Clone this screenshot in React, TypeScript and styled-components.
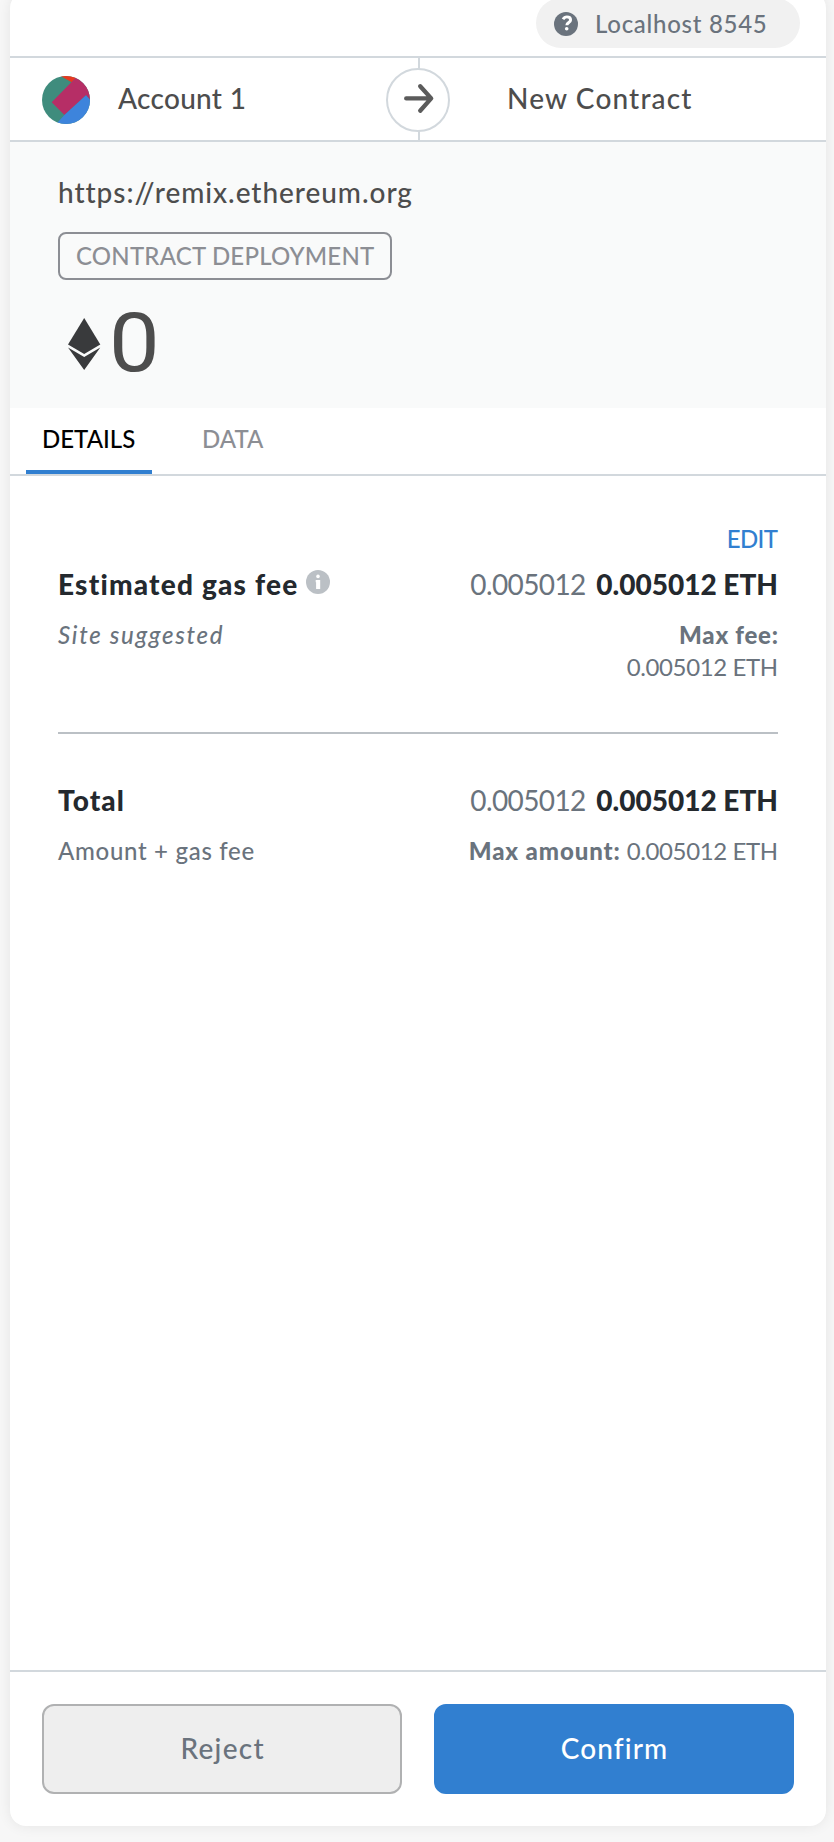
import React from 'react';
import styled, { createGlobalStyle, css } from 'styled-components';

const GlobalStyle = createGlobalStyle`
  * { box-sizing: border-box; }
  body { margin: 0; background: #f7f7f7; font-family: Lato, "Liberation Sans", sans-serif; }
  button { font-family: inherit; }
`;

const colors = {
  line: '#d2d8dd',
  text: '#4d4d4d',
  muted: '#6a737d',
  strong: '#24292e',
  tag: '#8c8e94',
  divider: '#bbc0c5',
  primary: '#317fd0',
};

const Page = styled.main`
  display: flex;
  height: 1842px;
  padding: 0 8px 0 10px;
  overflow: hidden;
`;

const Card = styled.section`
  display: flex;
  flex-direction: column;
  flex: 1;
  height: 1834px;
  margin-top: -8px;
  background: #fff;
  border-radius: 16px;
  box-shadow: 0 0 14px rgba(0, 0, 0, 0.08);
`;

interface TextProps {
  $size?: number;
  $weight?: number;
  $track?: number;
  $color?: string;
  $italic?: boolean;
}

const Text = styled.span<TextProps>`
  font-size: ${p => p.$size ?? 24}px;
  font-weight: ${p => p.$weight ?? 400};
  font-style: ${p => (p.$italic ? 'italic' : 'normal')};
  letter-spacing: ${p => p.$track ?? 0}px;
  margin-right: ${p => -(p.$track ?? 0)}px;
  color: ${p => p.$color ?? colors.muted};
  white-space: nowrap;
`;

const Header = styled.header`
  display: flex;
  justify-content: flex-end;
  height: 66px;
  padding: 6px 26px 0 0;
  border-bottom: 2px solid ${colors.line};
`;

const NetworkPill = styled.div`
  display: flex;
  align-items: center;
  width: 264px;
  height: 50px;
  padding: 2px 0 0 18px;
  gap: 17px;
  border-radius: 25px;
  background: #f1f1f1;

  ${Text} { padding-bottom: 2px; }
`;

const Parties = styled.div`
  position: relative;
  display: grid;
  grid-template-columns: 1fr 1fr;
  height: 84px;
  border-bottom: 2px solid ${colors.line};
`;

const Sender = styled.div`
  display: flex;
  align-items: center;
  gap: 28px;
  padding: 2px 0 0 32px;

  ${Text} { padding-bottom: 4px; }
`;

const Recipient = styled.div`
  display: flex;
  align-items: center;
  padding: 0 0 2px 87px;
  border-left: 2px solid ${colors.line};
`;

const ArrowBadge = styled.div`
  position: absolute;
  top: 10px;
  left: calc(50% - 32px);
  width: 64px;
  height: 64px;
  border: 2px solid ${colors.line};
  border-radius: 50%;
  background: #fff;

  svg { display: block; }
`;

const Summary = styled.div`
  display: flex;
  flex-direction: column;
  align-items: flex-start;
  height: 266px;
  padding: 33px 48px 0;
  background: #f9fafa;
`;

const Origin = styled.div`
  display: flex;
  height: 34px;
  line-height: 34px;
`;

const ActionTag = styled.div`
  display: flex;
  align-items: center;
  width: 334px;
  height: 48px;
  margin-top: 23px;
  padding: 0 0 2px 16px;
  border: 2px solid ${colors.tag};
  border-radius: 8px;
`;

const Amount = styled.div`
  display: flex;
  align-items: center;
  gap: 8px;
  height: 80px;
  margin-top: 20px;
  padding-left: 10px;
  line-height: 80px;

  svg { margin-top: 8px; }
`;

const AmountValue = styled.span`
  padding-top: 6px;
  font-family: Roboto, sans-serif;
  font-size: 82px;
  color: ${colors.text};
  transform: scaleX(1.1);
  transform-origin: left;
`;

const Tabs = styled.nav`
  display: flex;
  gap: 34px;
  height: 68px;
  padding-left: 16px;
  border-bottom: 2px solid ${colors.line};
`;

const Tab = styled.button<{ $active?: boolean }>`
  display: flex;
  align-items: center;
  height: 66px;
  padding: 0 16px 2px;
  background: none;
  border: 0;
  border-bottom: 4px solid transparent;
  ${p => p.$active && css`
    width: 126px;
    border-bottom-color: ${colors.primary};
  `}
`;

const Details = styled.div`
  flex: 1;
  padding: 49px 48px 0;
`;

const EditRow = styled.div`
  display: flex;
  justify-content: flex-end;
  margin-bottom: 14px;
  line-height: 28px;
`;

const Row = styled.div`
  display: flex;
  justify-content: space-between;
  line-height: 34px;
`;

const SubRow = styled(Row)`
  margin-top: 18px;
  line-height: 32px;
`;

const Label = styled.div`
  display: flex;
  align-items: center;
  gap: 9px;

  svg { margin-top: -4px; }
`;

const Values = styled.div<{ $gap?: number }>`
  display: flex;
  gap: ${p => p.$gap ?? 0}px;
`;

const StackedValues = styled(Values)`
  flex-direction: column;
  align-items: flex-end;
`;

const Divider = styled.hr`
  height: 2px;
  margin: 49px 0;
  border: 0;
  background: ${colors.divider};
`;

const Footer = styled.footer`
  display: grid;
  grid-template-columns: 1fr 1fr;
  gap: 32px;
  padding: 32px;
  border-top: 2px solid ${colors.line};
`;

const Button = styled.button<{ $primary?: boolean }>`
  display: flex;
  align-items: center;
  justify-content: center;
  height: 90px;
  padding: 0 0 2px;
  border-radius: 12px;
  border: 2px solid ${p => (p.$primary ? colors.primary : '#b0b1b2')};
  background: ${p => (p.$primary ? colors.primary : '#eee')};
`;

const QuestionIcon = () => (
  <svg width="24" height="24" viewBox="0 0 24 24" fill="none">
    <circle cx="12" cy="12" r="12" fill={colors.muted} />
    <path d="M9 7.2Q10.4 4.9 12.9 4.9C15.3 4.9 16.6 6.2 16.6 7.9C16.6 10.4 12.9 10.5 12.8 13.2" stroke="#fff" strokeWidth="2.9" />
    <circle cx="12.7" cy="16.7" r="1.8" fill="#fff" />
  </svg>
);

const Avatar = () => (
  <svg width="48" height="48" viewBox="0 0 48 48">
    <clipPath id="avatar-clip"><circle cx="24" cy="24" r="24" /></clipPath>
    <g clipPath="url(#avatar-clip)">
      <rect width="48" height="48" fill="#3f8c7d" />
      <path d="M15 -2L29.7 6.3L38 -2Z" fill="#e8381f" />
      <path d="M9.7 26.3L38 -2.5L54 8V30L44 19.3L22.4 39Z" fill="#b62e66" />
      <path d="M44 19.3L52 28V52H10.5L22.4 39Z" fill="#3d84dc" />
    </g>
  </svg>
);

const ArrowIcon = () => (
  <svg width="60" height="60" viewBox="2 2 60 60" fill="none" stroke="#5b5b5b" strokeWidth="4.3" strokeLinecap="round" strokeLinejoin="round">
    <path d="M20.2 30.4H44.5M34.2 18.2L45.2 30.4L34.2 42.7" />
  </svg>
);

const EtherIcon = () => (
  <svg width="33" height="52" viewBox="0 0 33 52" fill="#393a3c">
    <path d="M16.2 0L32.3 26.5L16.2 36L0 26.5Z" />
    <path d="M0 29.5L16.2 39L32.3 29.5L16.2 52Z" />
  </svg>
);

const InfoIcon = () => (
  <svg width="24" height="24" viewBox="0 0 24 24">
    <circle cx="12" cy="12" r="12" fill={colors.divider} />
    <circle cx="12" cy="6.4" r="1.8" fill="#fff" />
    <path d="M9.7 10H14.2V19H10.1V12.2H9.7Z" fill="#fff" />
  </svg>
);

export default function App() {
  return (
    <>
      <GlobalStyle />
      <Page>
        <Card>
          <Header>
            <NetworkPill>
              <QuestionIcon />
              <Text $weight={500} $track={0.72}>Localhost 8545</Text>
            </NetworkPill>
          </Header>
          <Parties>
            <Sender>
              <Avatar />
              <Text $size={28} $weight={500} $track={0.3} $color={colors.text}>Account 1</Text>
            </Sender>
            <Recipient>
              <Text $size={28} $weight={500} $track={1.15} $color={colors.text}>New Contract</Text>
            </Recipient>
            <ArrowBadge><ArrowIcon /></ArrowBadge>
          </Parties>
          <Summary>
            <Origin>
              <Text $size={28} $weight={500} $track={0.95} $color={colors.text}>https://remix.ethereum.org</Text>
            </Origin>
            <ActionTag>
              <Text $weight={500} $track={0.2} $color={colors.tag}>CONTRACT DEPLOYMENT</Text>
            </ActionTag>
            <Amount>
              <EtherIcon />
              <AmountValue>0</AmountValue>
            </Amount>
          </Summary>
          <Tabs>
            <Tab $active><Text $weight={500} $color="#000">DETAILS</Text></Tab>
            <Tab><Text $weight={500} $color={colors.tag}>DATA</Text></Tab>
          </Tabs>
          <Details>
            <EditRow>
              <Text $weight={500} $track={-0.6} $color={colors.primary}>EDIT</Text>
            </EditRow>
            <Row>
              <Label>
                <Text $size={28} $weight={900} $track={1.2} $color={colors.strong}>Estimated gas fee</Text>
                <InfoIcon />
              </Label>
              <Values $gap={10}>
                <Text $size={28} $track={-0.6}>0.005012</Text>
                <Text $size={28} $weight={900} $color={colors.strong}>0.005012 ETH</Text>
              </Values>
            </Row>
            <SubRow>
              <Text $italic $weight={500} $track={1.7}>Site suggested</Text>
              <StackedValues>
                <Text $weight={900} $track={0.75}>Max fee:</Text>
                <Text $track={-0.4}>0.005012 ETH</Text>
              </StackedValues>
            </SubRow>
            <Divider />
            <Row>
              <Text $size={28} $weight={900} $track={1.1} $color={colors.strong}>Total</Text>
              <Values $gap={10}>
                <Text $size={28} $track={-0.6}>0.005012</Text>
                <Text $size={28} $weight={900} $color={colors.strong}>0.005012 ETH</Text>
              </Values>
            </Row>
            <SubRow>
              <Text $weight={500} $track={0.7}>Amount + gas fee</Text>
              <Values $gap={7}>
                <Text $weight={900} $track={0.9}>Max amount:</Text>
                <Text $track={-0.4}>0.005012 ETH</Text>
              </Values>
            </SubRow>
          </Details>
          <Footer>
            <Button><Text $size={28} $weight={500} $track={1.3}>Reject</Text></Button>
            <Button $primary><Text $size={28} $weight={500} $track={1.1} $color="#fff">Confirm</Text></Button>
          </Footer>
        </Card>
      </Page>
    </>
  );
}
